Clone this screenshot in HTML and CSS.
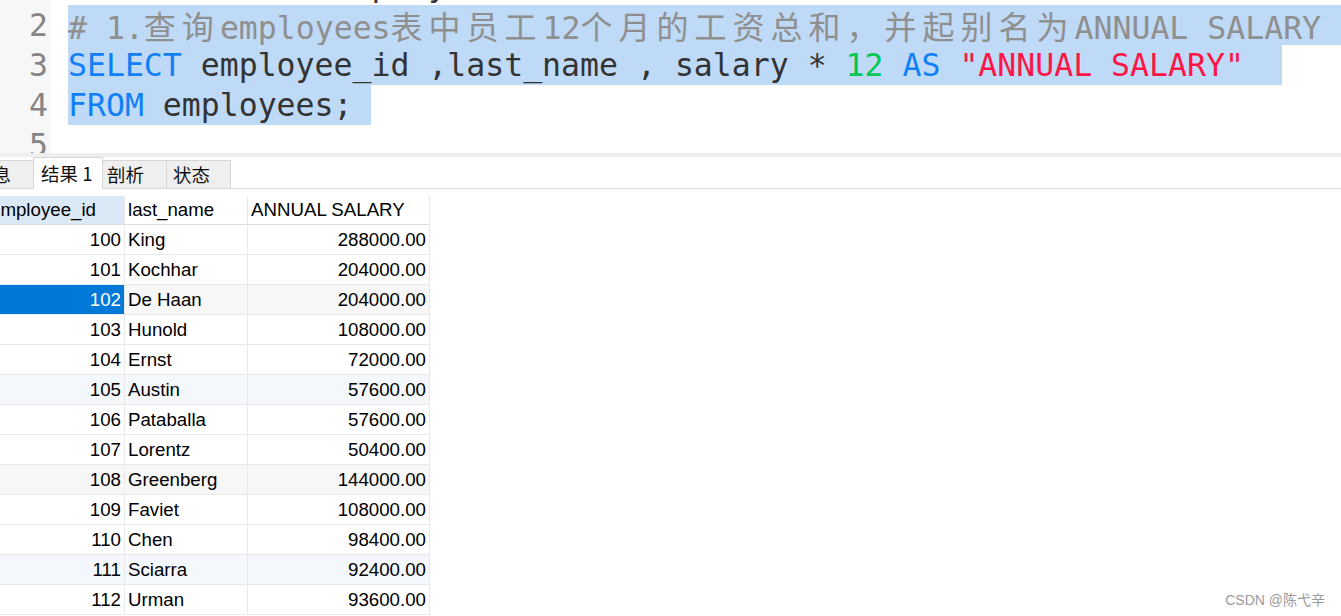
FILE: index.html
```html
<!DOCTYPE html>
<html lang="zh">
<head>
<meta charset="utf-8">
<title>SQL</title>
<link rel="stylesheet" href="styles.css">
</head>
<body>
<div class="editor">
  <div class="lines">
    <div class="line"><span class="ln">1</span><span class="code"><span class="kw">SELECT</span> * <span class="kw">FROM</span> employees;</span></div>
    <div class="line"><span class="ln">2</span><span class="code sel fill cm"># 1.<span class="cjk">查询</span>employees<span class="cjk">表中员工</span>12<span class="cjk">个月的工资总和，并起别名为</span>ANNUAL SALARY</span></div>
    <div class="line"><span class="ln">3</span><span class="code sel"><span class="kw">SELECT</span> employee_id ,last_name , salary * <span class="num">12</span> <span class="kw">AS</span> <span class="str">"ANNUAL SALARY"</span>  </span></div>
    <div class="line"><span class="ln">4</span><span class="code sel"><span class="kw">FROM</span> employees; </span></div>
    <div class="line"><span class="ln">5</span><span class="code"></span></div>
  </div>
</div>
<div class="splitter"></div>
<div class="tabs">
  <div class="tab t-info">信息</div>
  <div class="tab active t-res">结果 1</div>
  <div class="tab t-prof">剖析</div>
  <div class="tab t-stat">状态</div>
</div>
<div class="grid">
  <div class="hd hd-sort">employee_id</div><div class="hd">last_name</div><div class="hd">ANNUAL SALARY</div>
  <div class="c r">100</div><div class="c">King</div><div class="c r">288000.00</div>
  <div class="c r">101</div><div class="c">Kochhar</div><div class="c r">204000.00</div>
  <div class="c r gy cur">102</div><div class="c gy">De Haan</div><div class="c r gy">204000.00</div>
  <div class="c r">103</div><div class="c">Hunold</div><div class="c r">108000.00</div>
  <div class="c r">104</div><div class="c">Ernst</div><div class="c r">72000.00</div>
  <div class="c r bl">105</div><div class="c bl">Austin</div><div class="c r bl">57600.00</div>
  <div class="c r">106</div><div class="c">Pataballa</div><div class="c r">57600.00</div>
  <div class="c r">107</div><div class="c">Lorentz</div><div class="c r">50400.00</div>
  <div class="c r gy">108</div><div class="c gy">Greenberg</div><div class="c r gy">144000.00</div>
  <div class="c r">109</div><div class="c">Faviet</div><div class="c r">108000.00</div>
  <div class="c r">110</div><div class="c">Chen</div><div class="c r">98400.00</div>
  <div class="c r bl">111</div><div class="c bl">Sciarra</div><div class="c r bl">92400.00</div>
  <div class="c r">112</div><div class="c">Urman</div><div class="c r">93600.00</div>
</div>
<div class="mark">CSDN @陈弋辛</div>
</body>
</html>
```
FILE: styles.css
```css
html, body {
  margin: 0;
  padding: 0;
  background: #ffffff;
  overflow: hidden;
}
body {
  width: 1341px;
  height: 616px;
  position: relative;
  font-family: "Liberation Sans", "Noto Sans CJK SC", sans-serif;
}
.editor {
  height: 153px;
  overflow: hidden;
}
.lines {
  margin-top: -35px;
}
.line {
  display: flex;
  height: 40px;
  line-height: 40px;
  font-family: "DejaVu Sans Mono", "Noto Sans CJK SC", monospace;
  font-size: 31.5px;
  color: #333333;
}
.ln {
  flex: none;
  width: 51px;
  box-sizing: border-box;
  padding-right: 3px;
  text-align: right;
  background: #f7f7f7;
  color: #858585;
}
.code {
  margin-left: 17px;
  white-space: pre;
  height: 40px;
}
.sel {
  background: #bfdaf7;
}
.fill {
  flex: 1;
}
.cm {
  color: #8f8f8f;
}
.cjk {
  font-family: "Noto Sans CJK SC", sans-serif;
  font-size: 32px;
  letter-spacing: 6px;
}
.kw {
  color: #1280f5;
}
.num {
  color: #00c853;
}
.str {
  color: #ff1446;
}
.splitter {
  height: 4px;
  background: #efefef;
}
.tabs {
  display: flex;
  align-items: flex-end;
  height: 32px;
  margin-left: -35px;
  border-bottom: 1px solid #dedede;
  box-sizing: border-box;
}
.tab {
  box-sizing: border-box;
  height: 29px;
  line-height: 27px;
  background: #efefef;
  border: 1px solid #d6d6d6;
  font-family: "Noto Sans CJK SC", sans-serif;
  font-size: 18.5px;
  color: #111111;
  margin-bottom: -1px;
  margin-right: -1px;
}
.tab.active {
  height: 32px;
  line-height: 30px;
  background: #ffffff;
  border-bottom-color: #ffffff;
  position: relative;
}
.t-info { width: 69px; padding-left: 8px; }
.t-res { width: 70px; padding-left: 7px; }
.t-prof { width: 65px; padding-left: 4px; }
.t-stat { width: 65px; padding-left: 6px; }
.grid {
  display: grid;
  grid-template-columns: 138px 123px 182px;
  margin-left: -13px;
  margin-top: 7px;
  font-size: 18.7px;
  color: #000000;
}
.hd, .c {
  box-sizing: border-box;
  border-right: 1px solid #e9e9e9;
  border-bottom: 1px solid #e9e9e9;
  padding: 0 3px;
  white-space: nowrap;
  overflow: hidden;
}
.hd {
  height: 29px;
  line-height: 28px;
  border-bottom-color: #dddddd;
}
.hd-sort {
  background: #dbe9f7;
}
.c {
  height: 30px;
  line-height: 29px;
}
.r {
  text-align: right;
}
.gy {
  background: #f7f7f7;
}
.bl {
  background: #f4f8fc;
}
.cur {
  background: #0078d7;
  color: #ffffff;
}
.mark {
  position: absolute;
  right: 16px;
  bottom: 7px;
  font-size: 14px;
  color: #9a9a9a;
}
```
